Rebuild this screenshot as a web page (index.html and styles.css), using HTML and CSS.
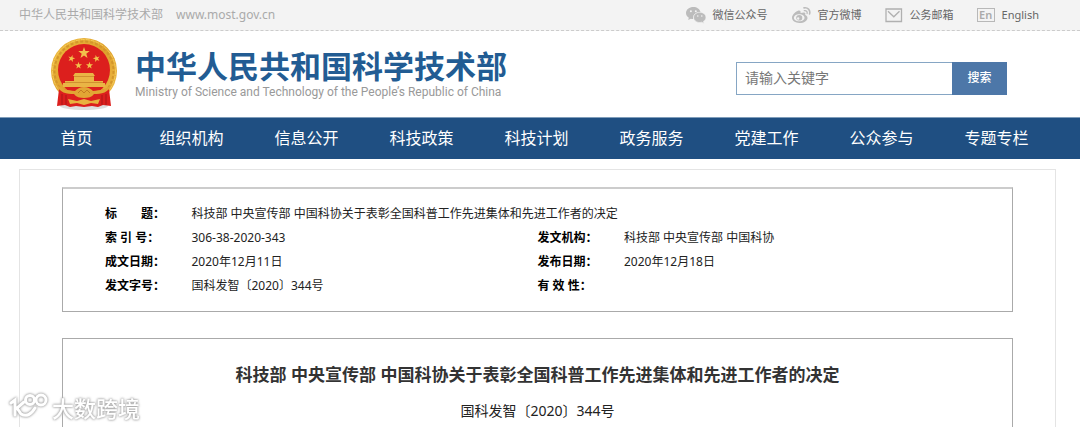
FILE: index.html
```html
<!DOCTYPE html>
<html lang="zh-CN">
<head>
<meta charset="utf-8">
<meta name="viewport" content="width=device-width, initial-scale=1">
<title>中华人民共和国科学技术部</title>
<link rel="stylesheet" href="styles.css">
</head>
<body>
<div class="topbar">
  <div class="site-name"><span>中华人民共和国科学技术部</span><span class="site-url">www.most.gov.cn</span></div>
  <div class="quick-links">
    <a class="quick-link" href="#">
      <svg width="20" height="18" viewBox="0 0 20 18" aria-hidden="true"><path fill="#bcbcbc" d="M7.4 1C3.3 1 0 3.600 0 7c0 1.900 1.100 3.600 2.800 4.700L2.200 14l2.600-1.300c.8.2 1.500.3 2.300.3C6.500 9 9.500 6 14.500 6 13.800 3 10.900 1 7.400 1z"/><path fill="#bcbcbc" stroke="#f3f3f3" stroke-width=".6" d="M13.800 6.300c-3.500 0-6.200 2.300-6.200 5.100s2.700 5.100 6.200 5.100c.7 0 1.400-.1 2-.3l2.200 1.200-.6-2c1.500-.9 2.500-2.300 2.500-4 0-2.800-2.700-5.100-6.100-5.100z"/><g fill="#f3f3f3"><circle cx="4.900" cy="5.200" r="1"/><circle cx="9.800" cy="5.200" r="1"/><circle cx="11.800" cy="10" r=".8"/><circle cx="15.800" cy="10" r=".8"/></g></svg>
      <span>微信公众号</span></a>
    <a class="quick-link" href="#">
      <svg width="20" height="18" viewBox="0 0 20 18" aria-hidden="true"><path fill="#bcbcbc" fill-rule="evenodd" d="M7.500 4.500C5 5.200 1 8.700 1 11.800 1 14.700 4.300 17 8.400 17c4.800 0 8.100-2.600 8.100-5.100 0-1.700-1.300-2.500-2.400-2.800.5-1.300.3-2-.3-2.400-.9-.6-2.500-.3-4.300.4.500-1.700-.3-3-2-2.600zM8.200 8.200c3 0 5.300 1.500 5.300 3.500S11.200 15.300 8.200 15.300 2.900 13.800 2.900 11.800s2.300-3.600 5.300-3.600z"/><path fill="#bcbcbc" fill-rule="evenodd" d="M8.200 8.900a3 2.800 0 1 0 .1 5.700 3 2.800 0 1 0-.1-5.700zM7.200 11.300a1.200 1.200 0 1 1 0 2.400 1.200 1.200 0 1 1 0-2.400z"/><g fill="none" stroke="#bcbcbc" stroke-linecap="round"><path stroke-width="1.600" d="M13 1.900c3.600-.8 6.600 2.200 5.600 6"/><path stroke-width="1.300" d="M13.300 4.700c1.900-.4 3.300 1 2.800 2.800"/></g></svg>
      <span>官方微博</span></a>
    <a class="quick-link" href="#">
      <svg width="18" height="18" viewBox="0 0 18 18" aria-hidden="true"><path fill="none" stroke="#b0b0b0" stroke-width="1.300" d="M1 3h15.500v12.500H1zM3 5.200l5.800 5.600 5.700-5.600"/></svg>
      <span>公务邮箱</span></a>
    <a class="quick-link" href="#">
      <span class="en-icon" aria-hidden="true">En</span>
      <span>English</span></a>
  </div>
</div>

<header class="header">
  <a class="brand" href="#">
    <svg class="emblem" width="68" height="74" viewBox="0 0 68 74" aria-hidden="true">
      <defs>
        <linearGradient id="gold" x1="0" y1="0" x2="1" y2="1"><stop offset="0" stop-color="#efbd3f"/><stop offset=".5" stop-color="#dfa02c"/><stop offset="1" stop-color="#f0bd47"/></linearGradient>
        <path id="star" d="M0-6 1.400-1.900 5.700-1.900 2.300.7 3.500 4.900 0 2.400-3.500 4.900-2.300.7-5.700-1.900-1.400-1.900z"/>
      </defs>
      <ellipse cx="34" cy="69" rx="24" ry="4" fill="#ddd"/>
      <circle cx="34" cy="34" r="33" fill="url(#gold)"/>
      <circle cx="34" cy="34" r="29.500" fill="none" stroke="#d3962b" stroke-width="2" stroke-dasharray="3 2"/>
      <circle cx="34" cy="34" r="31.500" fill="none" stroke="#f3cb5b" stroke-width="1" stroke-dasharray="4 1"/>
      <circle cx="34" cy="33" r="26" fill="#dc1f1d"/>
      <g fill="#f2c14b"><use href="#star" x="34" y="16"/><use href="#star" transform="translate(21.500 21.500) rotate(15) scale(.62)"/><use href="#star" transform="translate(46.500 21.500) rotate(-15) scale(.62)"/><use href="#star" transform="translate(28.500 28.500) scale(.62)"/><use href="#star" transform="translate(39.500 28.500) scale(.62)"/></g>
      <path fill="#eab545" d="M25 36h18l2 3h-1v5h9v2h2v4H13v-4h2v-2h9v-5h-1z"/>
      <path stroke="#d0902f" d="M24 39.500h20M15 45.500h38" fill="none"/>
      <path fill="#dc1f1d" d="M9 52l17 2h16l17-2 2 17-8-1-5 2-6-1-8 1-8-1-6 1-5-2-8 1z"/>
      <path fill="#e2a634" d="M6 47c6 6 12 6 19 7 2-2 5-4 9-4s7 2 9 4c7-1 13-1 19-7-3 9-11 10-18 10-2 3-6 4-10 4s-8-1-10-4c-7 0-15-1-18-10z"/>
      <path fill="none" stroke="#c47c22" d="M28 56l3-3 3 3 3-3 3 3"/>
      <path fill="#e8b23f" d="M18 62l9 2 7-2 7 2 9-2-2 5-7-1-7 2-7-2-7 1z"/>
      <path stroke="#aa1718" d="M12 57v11M16 58v10M52 58v10M56 57v11" fill="none"/>
    </svg>
    <span class="brand-text">
      <span class="brand-cn">中华人民共和国科学技术部</span>
      <span class="brand-en">Ministry of Science and Technology of the People’s Republic of China</span>
    </span>
  </a>
  <form class="search">
    <input class="search-input" type="text" placeholder="请输入关键字" aria-label="请输入关键字">
    <button class="search-button" type="button">搜索</button>
  </form>
</header>

<nav class="nav">
  <a href="#">首页</a><a href="#">组织机构</a><a href="#">信息公开</a><a href="#">科技政策</a><a href="#">科技计划</a><a href="#">政务服务</a><a href="#">党建工作</a><a href="#">公众参与</a><a href="#">专题专栏</a>
</nav>

<main class="content">
  <section class="info">
    <table class="info-table">
      <colgroup><col class="col-label"><col class="col-value"><col class="col-label"><col class="col-value"></colgroup>
      <tr><th scope="row">标　　题：</th><td colspan="3">科技部 中央宣传部 中国科协关于表彰全国科普工作先进集体和先进工作者的决定</td></tr>
      <tr><th scope="row">索 引 号：</th><td>306-38-2020-343</td><th scope="row">发文机构：</th><td>科技部 中央宣传部 中国科协</td></tr>
      <tr><th scope="row">成文日期：</th><td>2020年12月11日</td><th scope="row">发布日期：</th><td>2020年12月18日</td></tr>
      <tr><th scope="row">发文字号：</th><td>国科发智〔2020〕344号</td><th scope="row">有 效 性：</th><td></td></tr>
    </table>
  </section>
  <article class="article">
    <h1 class="article-title">科技部 中央宣传部 中国科协关于表彰全国科普工作先进集体和先进工作者的决定</h1>
    <p class="article-number">国科发智〔2020〕344号</p>
  </article>
</main>

<div class="watermark">
  <svg width="40" height="30" viewBox="0 0 40 30" aria-hidden="true"><g fill="none" stroke="#fff" stroke-width="3" stroke-linecap="round"><path d="M2 10l4-3v15M15 9l-7 6 4 6c5 3 10 1 14-6"/><circle cx="21" cy="7" r="4.500"/><circle cx="32" cy="7" r="5"/></g></svg>
  <span>大数跨境</span>
</div>
</body>
</html>
```

FILE: styles.css
```css
* { box-sizing: border-box; }

body {
  margin: 0;
  min-height: 100vh;
  display: flex;
  flex-direction: column;
  position: relative;
  background: #fff;
  color: #222;
  font: 12px/24px "Noto Sans", "Noto Sans CJK SC", sans-serif;
}

a { color: inherit; text-decoration: none; }

.topbar {
  display: flex;
  justify-content: space-between;
  align-items: center;
  height: 31px;
  padding: 0 41px 0 19px;
  background: #f3f3f3;
  border-bottom: 1px dashed #ccc;
}
.site-name { display: flex; gap: 13px; color: #aaa; line-height: 28px; }
.quick-links { display: flex; gap: 23px; color: #666; font-size: 11px; }
.quick-link { display: flex; align-items: center; gap: 7px; }
.en-icon {
  width: 18px;
  height: 14px;
  border: 1px solid #b8b8b8;
  color: #aaa;
  font-weight: 600;
  font-size: 11px;
  line-height: 12px;
  text-align: center;
}

.header {
  display: flex;
  justify-content: space-between;
  align-items: center;
  height: 86px;
  padding: 0 73px 0 50px;
}
.brand { display: flex; align-items: center; gap: 17px; }
.emblem { display: block; }
.brand-text { display: flex; flex-direction: column; }
.brand-cn { color: #225c93; font-size: 31px; font-weight: 700; line-height: 36px; }
.brand-en { color: #999; font-family: Roboto, sans-serif; font-size: 12px; line-height: 16px; }

.search { display: flex; width: 271px; height: 33px; margin-top: 8px; }
.search-input {
  flex: 1;
  min-width: 0;
  padding: 0 8px;
  border: 1px solid #86a6c4;
  border-right: 0;
  border-radius: 0;
  background: #fff;
  font: inherit;
  font-size: 14px;
}
.search-input::placeholder { color: #777; }
.search-button {
  width: 55px;
  padding: 0;
  border: 0;
  background: #4d77a8;
  color: #fff;
  font: inherit;
  font-size: 12px;
  font-weight: 500;
}

.nav {
  display: grid;
  grid-template-columns: repeat(9, 1fr);
  padding: 0 26px 0 19px;
  border-top: 1px solid #7f9dba;
  background: #1f4f82;
  color: #fff;
  font-size: 16px;
  line-height: 41px;
  text-align: center;
}

.content {
  flex: 1;
  display: flex;
  flex-direction: column;
  gap: 26px;
  margin: 10px 24px 0 19px;
  padding: 17px 42px 0;
  border: 1px solid #e4e4e4;
  border-bottom: 0;
}
.info {
  padding: 13px 42px;
  border: 1px solid #aaa;
  border-top: 2px solid #ccc;
}
.info-table { width: 100%; table-layout: fixed; border-collapse: collapse; }
.col-label { width: 10%; }
.col-value { width: 40%; }
.info-table th, .info-table td { height: 24px; padding: 0; text-align: left; white-space: nowrap; }
.info-table th { color: #000; font-weight: 700; }

.article {
  flex: 1;
  padding: 20px 0 0;
  border: 1px solid #aaa;
  border-bottom: 0;
  text-align: center;
}
.article-title { margin: 0; color: #333; font-size: 17px; font-weight: 700; line-height: 32px; }
.article-number { margin: 8px 0 0; font-size: 14px; line-height: 24px; }

.watermark {
  position: absolute;
  left: 9px;
  bottom: 4px;
  display: flex;
  align-items: center;
  gap: 3px;
  color: #fff;
  font-size: 22px;
  font-weight: 500;
  line-height: 30px;
  filter: drop-shadow(0 0 1px #999) drop-shadow(0 0 1px #ccc);
}
```
